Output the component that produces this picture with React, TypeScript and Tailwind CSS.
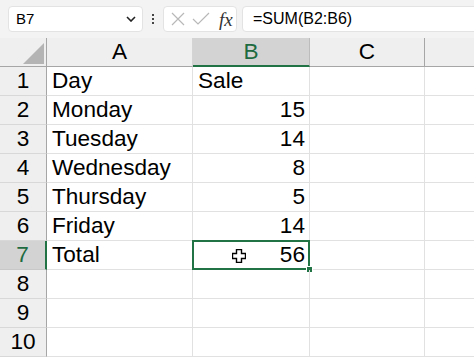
import React from "react";

const rows: { n: number; a: string; b: string }[] = [
  { n: 1, a: "Day", b: "Sale" },
  { n: 2, a: "Monday", b: "15" },
  { n: 3, a: "Tuesday", b: "14" },
  { n: 4, a: "Wednesday", b: "8" },
  { n: 5, a: "Thursday", b: "5" },
  { n: 6, a: "Friday", b: "14" },
  { n: 7, a: "Total", b: "56" },
  { n: 8, a: "", b: "" },
  { n: 9, a: "", b: "" },
  { n: 10, a: "", b: "" },
];

function Cursor() {
  return (
    <svg width="14" height="14" viewBox="0 0 14 14" className="absolute left-[39px] top-[8px]">
      <path
        d="M4.5 0.5 H9.5 V4.5 H13.5 V9.5 H9.5 V13.5 H4.5 V9.5 H0.5 V4.5 H4.5 Z"
        fill="#fff"
        stroke="#000"
        strokeWidth="1.4"
      />
    </svg>
  );
}

export default function App() {
  return (
    <div className="w-[474px] h-[358px] overflow-hidden bg-white" style={{ fontFamily: '"Liberation Sans", Arial, sans-serif' }}>
      {/* toolbar */}
      <div className="h-[38px] bg-[#f3f3f3] flex items-start pt-[6px] pl-[8px]">
        <div className="w-[135px] h-[26px] bg-white border border-[#e3e3e3] rounded-[4px] flex items-center pl-[7px] pr-[6px] text-[15px] text-black">
          <span className="flex-1">B7</span>
          <svg width="10" height="6" viewBox="0 0 10 6">
            <path d="M1 1 L5 5 L9 1" fill="none" stroke="#222" strokeWidth="1.6" />
          </svg>
        </div>
        <div className="w-[20px] h-[26px] flex flex-col items-center justify-center gap-[2px]">
          <div className="w-[2px] h-[2px] bg-[#444]" />
          <div className="w-[2px] h-[2px] bg-[#444]" />
          <div className="w-[2px] h-[2px] bg-[#444]" />
        </div>
        <div className="w-[74px] h-[26px] bg-white border border-[#e3e3e3] rounded-[4px] flex items-center pl-[6px] gap-[6px]">
          <svg width="16" height="16" viewBox="0 0 16 16">
            <path d="M2 2 L14 14 M14 2 L2 14" stroke="#b8b8b8" strokeWidth="1.2" fill="none" />
          </svg>
          <svg width="18" height="16" viewBox="0 0 18 16">
            <path d="M1 8 L6 13 L17 2" stroke="#b8b8b8" strokeWidth="1.2" fill="none" />
          </svg>
          <span className="text-[19px] italic text-[#333] ml-[3px] leading-none" style={{ fontFamily: '"Liberation Serif", serif' }}>
            fx
          </span>
        </div>
        <div className="ml-[5px] flex-1 -mr-[12px] h-[26px] bg-white border border-[#e3e3e3] rounded-[4px] flex items-center pl-[10px] text-[16px] text-black">
          =SUM(B2:B6)
        </div>
      </div>

      {/* grid */}
      <div className="grid grid-cols-[47px_146px_117px_115px_1fr] auto-rows-[29px] text-[22.6px] text-black">
        {/* header row */}
        <div className="bg-[#efefef] border-r border-b border-r-[#a6a6a6] border-b-[#a6a6a6] relative">
          <svg width="22" height="21" viewBox="0 0 22 21" className="absolute left-[23px] top-[5px]">
            <path d="M21 0 L21 21 L0 21 Z" fill="#b4b4b4" />
          </svg>
        </div>
        <div className="bg-[#efefef] border-r border-b border-r-[#d4d4d4] border-b-[#a6a6a6] flex items-center justify-center">A</div>
        <div className="bg-[#d3d3d3] border-r border-b-2 border-r-[#bcbcbc] border-b-[#217346] flex items-center justify-center text-[#1e6b41] pt-[1px]">B</div>
        <div className="bg-[#efefef] border-r border-b border-r-[#a6a6a6] border-b-[#a6a6a6] flex items-center justify-center">C</div>
        <div className="bg-[#efefef] border-b border-b-[#a6a6a6]" />

        {rows.map((r) => {
          const sel = r.n === 7;
          return (
            <React.Fragment key={r.n}>
              <div
                className={
                  sel
                    ? "bg-[#d3d3d3] border-r-2 border-b border-r-[#217346] border-b-[#c8c8c8] flex items-center justify-center text-[#1e6b41]"
                    : "bg-[#efefef] border-r border-b border-r-[#a6a6a6] border-b-[#d8d8d8] flex items-center justify-center"
                }
              >
                {r.n}
              </div>
              <div className="border-r border-b border-[#e1e1e1] flex items-center pl-[5px] whitespace-nowrap">{r.a}</div>
              <div
                className={
                  "border-r border-b border-[#e1e1e1] flex items-center whitespace-nowrap relative " +
                  (r.n === 1 ? "pl-[5px]" : "justify-end pr-[4px]")
                }
              >
                {r.b}
                {sel && (
                  <>
                    <div className="absolute -left-[1px] -top-[1px] -right-[1px] -bottom-[1px] border-2 border-[#217346] pointer-events-none" />
                    <div className="absolute -right-[4px] -bottom-[4px] w-[7px] h-[7px] bg-[#217346] border border-white" />
                    <Cursor />
                  </>
                )}
              </div>
              <div className="border-r border-b border-[#e1e1e1]" />
              <div className="border-b border-[#e1e1e1]" />
            </React.Fragment>
          );
        })}
      </div>
    </div>
  );
}
